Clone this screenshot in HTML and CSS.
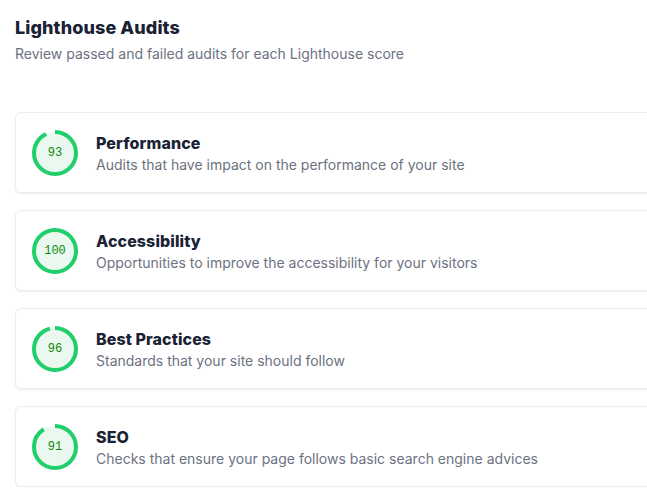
FILE: index.html
```html
<!DOCTYPE html>
<html lang="en">
<head>
<meta charset="utf-8">
<title>Lighthouse Audits</title>
<link rel="stylesheet" href="styles.css">
</head>
<body>
<main class="page">
  <header class="header">
    <h1 class="title">Lighthouse Audits</h1>
    <p class="subtitle">Review passed and failed audits for each Lighthouse score</p>
  </header>
  <section class="list">
    <article class="card">
      <div class="gauge">
        <svg viewBox="0 0 46 46" width="46" height="46"><circle class="gauge-bg" cx="23" cy="23" r="21"/><circle class="gauge-arc" cx="23" cy="23" r="21" pathLength="100" stroke-dasharray="93 100" transform="rotate(-90 23 23)"/></svg>
        <span class="gauge-num">93</span>
      </div>
      <div class="text">
        <h2 class="card-title">Performance</h2>
        <p class="card-desc">Audits that have impact on the performance of your site</p>
      </div>
    </article>
    <article class="card">
      <div class="gauge">
        <svg viewBox="0 0 46 46" width="46" height="46"><circle class="gauge-bg" cx="23" cy="23" r="21"/><circle class="gauge-arc" cx="23" cy="23" r="21" pathLength="100" stroke-dasharray="100 100" transform="rotate(-90 23 23)"/></svg>
        <span class="gauge-num">100</span>
      </div>
      <div class="text">
        <h2 class="card-title">Accessibility</h2>
        <p class="card-desc">Opportunities to improve the accessibility for your visitors</p>
      </div>
    </article>
    <article class="card">
      <div class="gauge">
        <svg viewBox="0 0 46 46" width="46" height="46"><circle class="gauge-bg" cx="23" cy="23" r="21"/><circle class="gauge-arc" cx="23" cy="23" r="21" pathLength="100" stroke-dasharray="96 100" transform="rotate(-90 23 23)"/></svg>
        <span class="gauge-num">96</span>
      </div>
      <div class="text">
        <h2 class="card-title">Best Practices</h2>
        <p class="card-desc">Standards that your site should follow</p>
      </div>
    </article>
    <article class="card">
      <div class="gauge">
        <svg viewBox="0 0 46 46" width="46" height="46"><circle class="gauge-bg" cx="23" cy="23" r="21"/><circle class="gauge-arc" cx="23" cy="23" r="21" pathLength="100" stroke-dasharray="91 100" transform="rotate(-90 23 23)"/></svg>
        <span class="gauge-num">91</span>
      </div>
      <div class="text">
        <h2 class="card-title">SEO</h2>
        <p class="card-desc">Checks that ensure your page follows basic search engine advices</p>
      </div>
    </article>
  </section>
</main>
</body>
</html>
```

FILE: styles.css
```css
html, body {
  margin: 0;
  padding: 0;
  background: #ffffff;
  overflow: hidden;
}
body {
  font-family: Inter, "Noto Sans", sans-serif;
  color: #1f2937;
}
.page {
  padding: 14px 0 0 15px;
  width: 700px;
}
.header {
  margin-bottom: 48px;
}
.title {
  margin: 0;
  font-size: 18px;
  line-height: 28px;
  font-weight: 800;
  color: #1a2233;
  letter-spacing: 0.1px;
}
.subtitle {
  margin: 2px 0 0;
  font-size: 14px;
  line-height: 20px;
  color: #6b7280;
}
.list {
  display: flex;
  flex-direction: column;
  gap: 17px;
}
.card {
  display: flex;
  align-items: center;
  gap: 18px;
  height: 81px;
  box-sizing: border-box;
  padding: 0 16px;
  border: 1px solid #eceef1;
  border-radius: 6px;
  box-shadow: 0 1px 2px rgba(0, 0, 0, 0.07);
  background: #fff;
}
.gauge {
  position: relative;
  width: 46px;
  height: 46px;
  flex: none;
  display: flex;
  align-items: center;
  justify-content: center;
}
.gauge svg {
  position: absolute;
  inset: 0;
}
.gauge-bg {
  fill: #ebf8ef;
  stroke: none;
}
.gauge-arc {
  fill: none;
  stroke: #1fcf6a;
  stroke-width: 4;
}
.gauge-num {
  position: relative;
  font-family: "Liberation Mono", "DejaVu Sans Mono", monospace;
  font-size: 12px;
  color: #0a8a0a;
}
.text {
  display: flex;
  flex-direction: column;
}
.card-title {
  margin: 0;
  font-size: 16px;
  line-height: 24px;
  font-weight: 800;
  color: #1a2233;
  letter-spacing: 0.1px;
}
.card-desc {
  margin: 0;
  font-size: 14px;
  line-height: 20px;
  color: #6b7280;
}
```
